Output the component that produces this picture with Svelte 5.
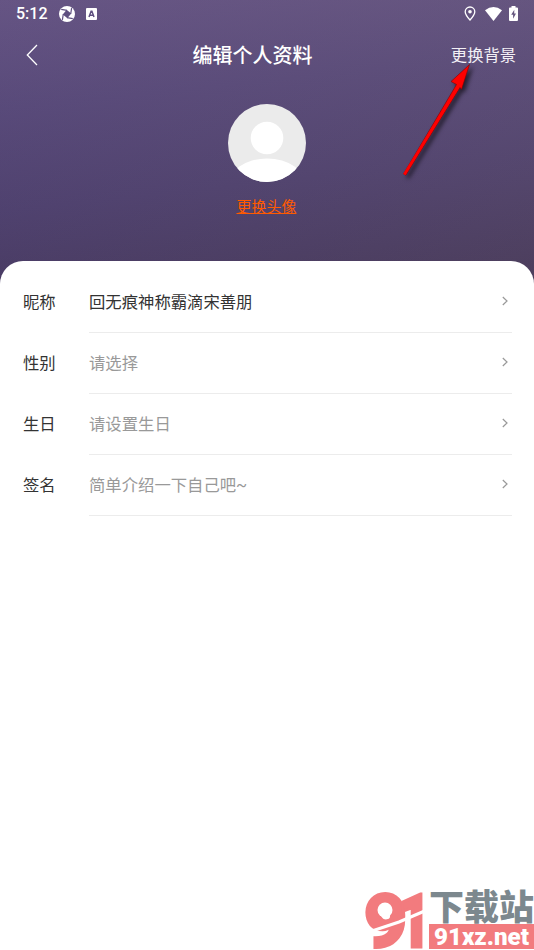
<!-- Edit profile screen -->
<script>
  const rows = [
    { label: "昵称", value: "回无痕神称霸滴宋善朋", filled: true },
    { label: "性别", value: "请选择", filled: false },
    { label: "生日", value: "请设置生日", filled: false },
    { label: "签名", value: "简单介绍一下自己吧~", filled: false }
  ];
</script>

<div class="screen">
  <header class="cover">
    <!-- Status bar -->
    <div class="status">
      <span class="time">5:12</span>
      <svg class="app-icon" width="16" height="16" viewBox="0 0 16 16">
        <circle cx="8" cy="8" r="8" fill="#fff" />
        <path d="M7.6 3.8 12.2 7.6 8.4 12.2 3.8 8.4Z" fill="#5f5080" />
        <path d="M8 4.3 2.2 3.4M11.7 8 12.6 2.2M8 11.7 13.8 12.6M4.3 8 3.4 13.8" stroke="#5f5080" stroke-width="1.2" />
      </svg>
      <svg class="lang-icon" width="11" height="12" viewBox="0 0 11 12">
        <rect width="11" height="12" rx="1" fill="#fff" />
        <path d="M3 9 5.1 3.2H5.9L8 9M3.8 7.2H7.2" fill="none" stroke="#5f5080" stroke-width="1.5" />
      </svg>
      <div class="status-right">
        <svg width="12" height="15" viewBox="0 0 12 15">
          <path d="M6 1C3.2 1 1.2 3.1 1.2 5.7 1.2 8.7 6 14 6 14S10.8 8.7 10.8 5.7C10.8 3.1 8.8 1 6 1Z" fill="none" stroke="#fff" stroke-width="1.3" />
          <circle cx="6" cy="5.7" r="1.8" fill="#fff" />
        </svg>
        <svg width="17" height="14" viewBox="0 0 17 14">
          <path d="M0 3.2Q8.5-3 17 3.2L8.5 14Z" fill="#fff" />
        </svg>
        <svg width="9" height="15" viewBox="0 0 9 15">
          <path d="M2.5 0H6.5V1.6H8Q9 1.6 9 2.6V14Q9 15 8 15H1Q0 15 0 14V2.6Q0 1.6 1 1.6H2.5Z" fill="#fff" />
          <path d="M5.3 3.8 2.2 8.8H4.1V12.8L7 7.6H5.2Z" fill="#66577f" />
        </svg>
      </div>
    </div>

    <!-- Title bar -->
    <div class="nav">
      <button class="back" aria-label="返回">
        <svg width="12" height="22" viewBox="0 0 12 22">
          <path d="M11 1 1.3 11 11 21" fill="none" stroke="#fff" stroke-width="1.3" />
        </svg>
      </button>
      <h1>编辑个人资料</h1>
      <button class="change-bg">更换背景</button>
    </div>

    <div class="profile">
      <svg width="78" height="78" viewBox="0 0 78 78">
        <defs>
          <clipPath id="avatar"><circle cx="39" cy="39" r="39" /></clipPath>
        </defs>
        <g clip-path="url(#avatar)">
          <rect width="78" height="78" fill="#ebebeb" />
          <circle cx="39" cy="34" r="16.3" fill="#fff" />
          <ellipse cx="39" cy="82" rx="39" ry="27.5" fill="#fff" />
        </g>
      </svg>
      <button class="change-avatar">更换头像</button>
    </div>
  </header>

  <main class="panel">
    {#each rows as row}
      <div class="row">
        <span class="label">{row.label}</span>
        <div class="field">
          <span class="value" class:filled={row.filled}>{row.value}</span>
          <svg width="6" height="10" viewBox="0 0 6 10">
            <path d="M.8 1 5 5 .8 9" fill="none" stroke="#999" stroke-width="1.2" />
          </svg>
        </div>
      </div>
    {/each}
  </main>

  <!-- Pointer to the background button -->
  <svg class="pointer" width="84" height="126" viewBox="0 0 84 126">
    <path d="M4.5 114 57.5 24.5 52 21.5 70.5 4.5 62.5 29.5 61 27.5 6.8 115.2Z" fill="#f00" stroke="#7d0000" stroke-width=".6" />
    <path d="M5.3 114.5 59 27" stroke="#f00" stroke-width="2.6" />
  </svg>

  <!-- Site badge -->
  <div class="badge">
    <svg width="64" height="60" viewBox="0 0 64 60">
      <g class="mark">
        <text x="0" y="57" textLength="43" lengthAdjust="spacingAndGlyphs">9</text>
        <text x="34" y="57" textLength="33" lengthAdjust="spacingAndGlyphs">1</text>
      </g>
      <circle cx="21" cy="20" r="7.5" fill="#fff" />
      <path d="M5 42 35 32 63 20" fill="none" stroke="#fff" stroke-width="3" />
    </svg>
    <div class="site">
      <span class="site-name">下载站</span>
      <svg class="site-url" width="105" height="25" viewBox="0 0 105 25">
        <text x="5" y="21" textLength="95" lengthAdjust="spacingAndGlyphs">91xz.net</text>
      </svg>
    </div>
  </div>
</div>

<style>
  :global(body) {
    margin: 0;
  }

  .screen {
    position: relative;
    width: 534px;
    height: 950px;
    overflow: hidden;
    background: #fff;
    font-family: Roboto, "Noto Sans CJK SC", sans-serif;
  }

  button {
    padding: 0;
    border: none;
    background: none;
    font-family: inherit;
    cursor: pointer;
  }

  svg {
    display: block;
    flex: none;
  }

  .cover {
    height: 284px;
    background:
      linear-gradient(100deg, rgba(62, 50, 120, 0.16), rgba(110, 95, 125, 0.14)),
      linear-gradient(174deg, #6d5b86 0%, #5d4e7a 32%, #52446d 62%, #463856 100%);
  }

  .status {
    display: flex;
    align-items: center;
    height: 27px;
    padding: 0 16px 0 16px;
    color: #fff;
  }

  .time {
    width: 43px;
    font-size: 16px;
    font-weight: 500;
    line-height: 20px;
  }

  .lang-icon {
    margin-left: 11px;
  }

  .status-right {
    display: flex;
    align-items: center;
    gap: 9px;
    margin-left: auto;
  }

  .status-right svg:last-child {
    margin-left: -2px;
  }

  .nav {
    display: grid;
    grid-template-columns: 166px 1fr auto;
    align-items: center;
    height: 56px;
    padding: 0 18px 0 26px;
    color: #fff;
  }

  .back {
    justify-self: start;
  }

  h1 {
    margin: 0;
    padding: 1px 0 0 0.5px;
    font-size: 20px;
    font-weight: 500;
    line-height: 30px;
  }

  .change-bg {
    padding-top: 1px;
    color: #f3f0f6;
    font-size: 16.3px;
    line-height: 24px;
  }

  .profile {
    display: flex;
    flex-direction: column;
    align-items: center;
    padding: 21px 1px 0 0;
  }

  .change-avatar {
    margin-top: 14px;
    color: #ff5a00;
    font-size: 15px;
    line-height: 22px;
    text-decoration: underline;
    text-decoration-thickness: 1px;
    text-underline-offset: 1px;
  }

  .panel {
    position: relative;
    margin-top: -23px;
    padding: 11px 22px 0;
    border-radius: 23px 23px 0 0;
    background: #fff;
  }

  .row {
    display: flex;
    height: 61px;
    font-size: 16.35px;
    line-height: 62px;
  }

  .label {
    width: 66px;
    padding-left: 1px;
    color: #333;
  }

  .field {
    display: flex;
    flex: 1;
    align-items: center;
    justify-content: space-between;
    padding-right: 4px;
    border-bottom: 1px solid #ececec;
  }

  .field svg {
    margin-bottom: 2px;
  }

  .value {
    padding-top: 1px;
    color: #999;
  }

  .value.filled {
    color: #333;
  }

  .pointer {
    position: absolute;
    left: 399px;
    top: 60px;
    filter: drop-shadow(3px 3px 2px rgba(0, 0, 0, 0.6));
  }

  .badge {
    position: absolute;
    right: 0;
    bottom: 0;
    display: flex;
    width: 170px;
    height: 60px;
  }

  .mark {
    fill: #f27b7e;
    stroke: #f27b7e;
    stroke-width: 3;
    font-family: Roboto, sans-serif;
    font-size: 74px;
    font-weight: 900;
  }

  .site {
    width: 105px;
    margin-left: 1px;
  }

  .site-name {
    display: block;
    height: 34px;
    color: #7c888e;
    font-size: 35px;
    font-weight: 900;
    line-height: 37px;
    white-space: nowrap;
  }

  .site-url {
    background: #f27b7e;
    fill: #fff;
    font-size: 23px;
    font-weight: 900;
  }
</style>
